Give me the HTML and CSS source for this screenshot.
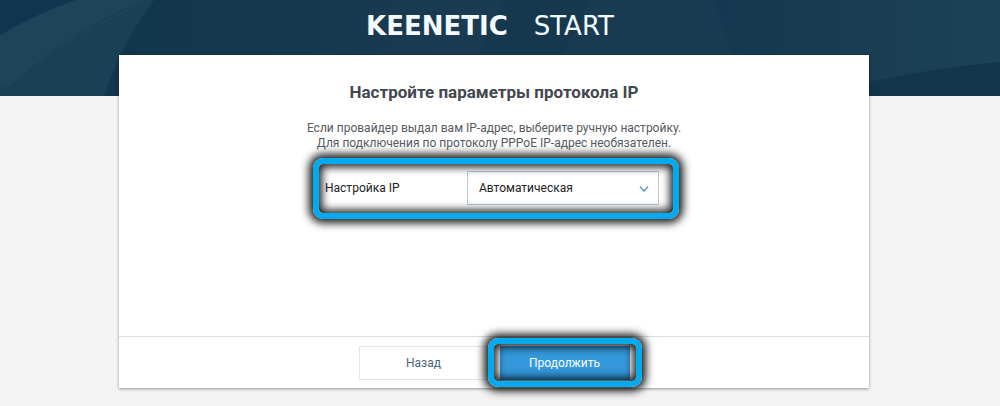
FILE: index.html
```html
<!DOCTYPE html>
<html lang="ru">
<head>
<meta charset="utf-8">
<meta name="viewport" content="width=device-width, initial-scale=1">
<title>Keenetic Start</title>
<link rel="stylesheet" href="styles.css">
</head>
<body>
<div class="page">
  <header class="header">
    <svg class="header-art" viewBox="0 0 1000 96" preserveAspectRatio="none" aria-hidden="true">
      <defs>
        <linearGradient id="base" x1="0" x2="1" y1="0" y2="0">
          <stop offset="0" stop-color="#12354f"/>
          <stop offset="0.14" stop-color="#12364c"/>
          <stop offset="0.5" stop-color="#1b3b52"/>
        </linearGradient>
        <linearGradient id="right" x1="0" x2="1" y1="0" y2="0">
          <stop offset="0" stop-color="#153850"/>
          <stop offset="1" stop-color="#1d4156"/>
        </linearGradient>
      </defs>
      <rect width="1000" height="96" fill="url(#base)"/>
      <path d="M0 35Q36 14 76 0H154Q121 43 104 96H0z" fill="#1f4358"/>
      <path d="M154 0Q70 34 14 84L0 88V96H104Q121 43 154 0z" fill="#1b3f55"/>
      <path d="M148 0Q70 30 12 86" fill="none" stroke="#183b52"/>
      <path d="M505 0Q488 27 477 60H734L714 0z" fill="#16384e"/>
      <path d="M590 0H714L734 60H560z" fill="#193b51"/>
      <path d="M714 0H1000V96H746z" fill="url(#right)"/>
      <path d="M850 86Q925 69 1000 62V96H850z" fill="#12354b"/>
    </svg>
    <div class="logo"><span class="logo-brand">KEENETIC</span><span class="logo-model">START</span></div>
  </header>
  <main class="card">
    <form class="wizard">
      <div class="content">
        <h1 class="title">Настройте параметры протокола IP</h1>
        <p class="hint">Если провайдер выдал вам IP-адрес, выберите ручную настройку.<br>Для подключения по протоколу PPPoE IP-адрес необязателен.</p>
        <div class="field highlight">
          <label class="label" for="ip-mode">Настройка IP</label>
          <div class="select-wrap">
            <select class="select" id="ip-mode">
              <option>Автоматическая</option>
              <option>Ручная</option>
            </select>
            <svg class="chevron" viewBox="0 0 10 8" aria-hidden="true"><path d="M1 1.5L5 6L9 1.5" fill="none" stroke="#6d9bb9" stroke-width="1.5"/></svg>
          </div>
        </div>
      </div>
      <div class="actions">
        <button class="button" type="button">Назад</button>
        <div class="highlight">
          <button class="button button-primary" type="button">Продолжить</button>
        </div>
      </div>
    </form>
  </main>
</div>
</body>
</html>
```
FILE: styles.css
```css
* {
  box-sizing: border-box;
}

body {
  margin: 0;
  background: #f4f4f4;
  color: #222;
  font: 12px/15px Roboto, "Liberation Sans", sans-serif;
}

.page {
  padding-bottom: 18px;
}

.header {
  position: relative;
  height: 96px;
  padding: 11px 20px 0 0;
  background: #16384e;
}

.header-art {
  position: absolute;
  inset: 0;
  width: 100%;
  height: 100%;
}

.logo {
  position: relative;
  display: flex;
  justify-content: center;
  gap: 26px;
  color: #f4fbff;
  font-family: "DejaVu Sans", sans-serif;
  font-size: 26px;
  line-height: 30px;
}

.logo-brand {
  font-weight: 700;
}

.logo-model {
  font-weight: 400;
}

.card {
  position: relative;
  width: 75%;
  margin: -41px auto 0;
  left: -6px;
  background: #fff;
  box-shadow: 0 1px 3px rgba(0, 0, 0, 0.4);
}

.content {
  display: flex;
  flex-direction: column;
  align-items: center;
  min-height: 281px;
  padding-top: 26px;
}

.title {
  margin: 0;
  color: #43474f;
  font-size: 17px;
  font-weight: 700;
  line-height: 22px;
}

.hint {
  margin: 18px 0 15px;
  color: #555a60;
  text-align: center;
}

.highlight {
  position: relative;
}

.highlight::after {
  content: "";
  position: absolute;
  inset: -8px -12px -7px -12px;
  border: 6px solid #03abee;
  border-radius: 10px;
  box-shadow: 0 0 8px 4px rgba(0, 0, 0, 0.9), inset 0 0 8px 3px rgba(0, 0, 0, 0.9);
  pointer-events: none;
}

.field {
  display: flex;
  align-items: center;
  justify-content: space-between;
  width: 342px;
  margin-left: 4px;
  padding: 5px 8px 7px 0;
}

.select-wrap {
  position: relative;
  width: 192px;
}

.select {
  appearance: none;
  display: block;
  width: 100%;
  height: 34px;
  padding: 0 28px 0 11px;
  border: 1px solid #b5cad5;
  border-radius: 1px;
  background: #fff;
  color: #222;
  font: inherit;
}

.chevron {
  position: absolute;
  top: 14px;
  right: 10px;
  width: 10px;
  height: 8px;
  pointer-events: none;
}

.actions {
  display: flex;
  justify-content: center;
  gap: 11px;
  padding: 9px 0 8px;
  border-top: 1px solid #d7dfe4;
}

.button {
  display: block;
  width: 130px;
  height: 34px;
  padding: 0;
  border: 1px solid #e1e8ed;
  background: #fff;
  color: #49667b;
  font: inherit;
}

.button-primary {
  border-color: #3498db;
  background: #3498db;
  color: #fff;
}
```
